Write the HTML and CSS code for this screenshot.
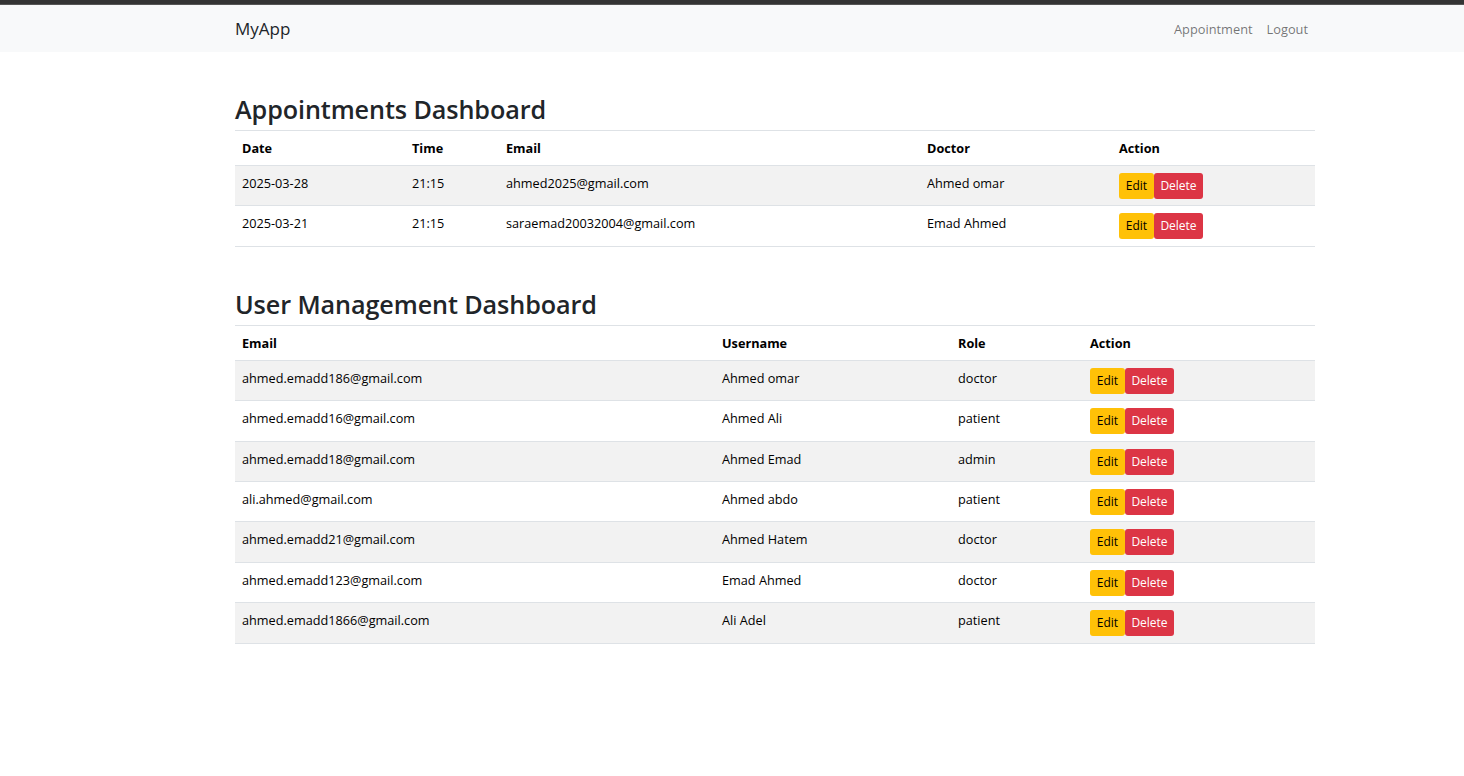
FILE: index.html
```html
<!DOCTYPE html>
<html lang="en">
<head>
<meta charset="utf-8">
<title>MyApp</title>
<link rel="stylesheet" href="styles.css">
</head>
<body>
<div class="topline"></div>
<nav class="navbar">
  <div class="container nav-inner">
    <a class="brand" href="#">MyApp</a>
    <div class="nav-links">
      <a class="nav-link" href="#">Appointment</a>
      <a class="nav-link" href="#">Logout</a>
    </div>
  </div>
</nav>
<main class="container main">
  <section class="section first">
    <h2>Appointments Dashboard</h2>
    <table class="table">
      <colgroup>
        <col class="c-a1"><col class="c-a2"><col class="c-a3"><col class="c-a4"><col class="c-a5">
      </colgroup>
      <thead>
        <tr><th>Date</th><th>Time</th><th>Email</th><th>Doctor</th><th>Action</th></tr>
      </thead>
      <tbody>
        <tr><td>2025-03-28</td><td>21:15</td><td>ahmed2025@gmail.com</td><td>Ahmed omar</td><td><span class="btn btn-edit">Edit</span><span class="btn btn-del">Delete</span></td></tr>
        <tr><td>2025-03-21</td><td>21:15</td><td>saraemad20032004@gmail.com</td><td>Emad Ahmed</td><td><span class="btn btn-edit">Edit</span><span class="btn btn-del">Delete</span></td></tr>
      </tbody>
    </table>
  </section>
  <section class="section second">
    <h2>User Management Dashboard</h2>
    <table class="table">
      <colgroup>
        <col class="c-u1"><col class="c-u2"><col class="c-u3"><col class="c-u4">
      </colgroup>
      <thead>
        <tr><th>Email</th><th>Username</th><th>Role</th><th>Action</th></tr>
      </thead>
      <tbody>
        <tr><td>ahmed.emadd186@gmail.com</td><td>Ahmed omar</td><td>doctor</td><td><span class="btn btn-edit">Edit</span><span class="btn btn-del">Delete</span></td></tr>
        <tr><td>ahmed.emadd16@gmail.com</td><td>Ahmed Ali</td><td>patient</td><td><span class="btn btn-edit">Edit</span><span class="btn btn-del">Delete</span></td></tr>
        <tr><td>ahmed.emadd18@gmail.com</td><td>Ahmed Emad</td><td>admin</td><td><span class="btn btn-edit">Edit</span><span class="btn btn-del">Delete</span></td></tr>
        <tr><td>ali.ahmed@gmail.com</td><td>Ahmed abdo</td><td>patient</td><td><span class="btn btn-edit">Edit</span><span class="btn btn-del">Delete</span></td></tr>
        <tr><td>ahmed.emadd21@gmail.com</td><td>Ahmed Hatem</td><td>doctor</td><td><span class="btn btn-edit">Edit</span><span class="btn btn-del">Delete</span></td></tr>
        <tr><td>ahmed.emadd123@gmail.com</td><td>Emad Ahmed</td><td>doctor</td><td><span class="btn btn-edit">Edit</span><span class="btn btn-del">Delete</span></td></tr>
        <tr><td>ahmed.emadd1866@gmail.com</td><td>Ali Adel</td><td>patient</td><td><span class="btn btn-edit">Edit</span><span class="btn btn-del">Delete</span></td></tr>
      </tbody>
    </table>
  </section>
</main>
</body>
</html>
```
FILE: styles.css
```css
* { box-sizing: border-box; }
html, body { margin: 0; padding: 0; }
body {
  font-family: "Open Sans", "Noto Sans", sans-serif;
  font-size: 12.7px;
  line-height: 20px;
  color: #212529;
  background: #fff;
}
.topline { height: 5px; background: #343434; border-bottom: 1px solid #555; }
.navbar { background: #f8f9fa; height: 47px; }
.container { width: 1080px; margin-left: 235px; }
.nav-inner { display: flex; align-items: center; justify-content: space-between; height: 47px; }
.brand { font-size: 17px; color: #212529; text-decoration: none; line-height: 24px; padding-top: 1px; }
.nav-links { display: flex; margin-right: 0; padding-top: 1px; }
.nav-link { font-size: 12.8px; color: rgba(0,0,0,0.55); text-decoration: none; padding: 0 7px; }
.main { padding-top: 41px; }
h2 {
  margin: 0 0 4px;
  font-size: 25.2px;
  font-weight: 550;
  line-height: 33px;
  letter-spacing: -0.1px;
  color: #212529;
}
.section.second { margin-top: 41px; }
.table { width: 100%; border-collapse: collapse; table-layout: fixed; color: #000; }
.table th, .table td { text-align: left; padding: 7px; vertical-align: top; border-bottom: 1px solid #dee2e6; }
.table thead th { font-weight: 700; border-top: 1px solid #dee2e6; height: 35px; padding-top: 7px; }
.table tbody td { height: 39.4px; padding: 7px 7px 6.4px; }
.table tbody tr:nth-child(odd) td { background: #f2f2f2; }
.c-a1 { width: 170px; } .c-a2 { width: 94px; } .c-a3 { width: 421px; } .c-a4 { width: 192px; } .c-a5 { width: 203px; }
.c-u1 { width: 480px; } .c-u2 { width: 236px; } .c-u3 { width: 132px; } .c-u4 { width: 232px; }
.btn {
  display: inline-block;
  height: 26px;
  line-height: 26px;
  font-size: 12px;
  border-radius: 3px;
  vertical-align: top;
  text-align: center;
}
.btn-edit { background: #ffc107; color: #000; width: 35px; }
.btn-del { background: #dc3545; color: #fff; width: 49px; }
```
